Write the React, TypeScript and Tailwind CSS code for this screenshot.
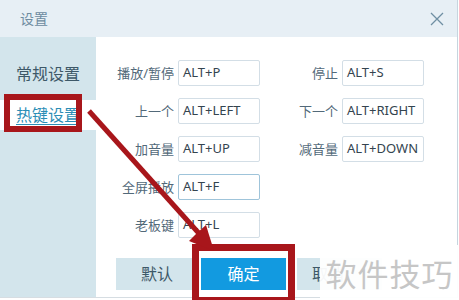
import React from 'react';

const FONT = { fontFamily: '"Noto Sans", "Noto Sans CJK SC", sans-serif' };

type Hotkey = { label: string; value: string; focus?: boolean };

const ROWS: [Hotkey, Hotkey | null][] = [
  [{ label: '播放/暂停', value: 'ALT+P' }, { label: '停止', value: 'ALT+S' }],
  [{ label: '上一个', value: 'ALT+LEFT' }, { label: '下一个', value: 'ALT+RIGHT' }],
  [{ label: '加音量', value: 'ALT+UP' }, { label: '减音量', value: 'ALT+DOWN' }],
  [{ label: '全屏播放', value: 'ALT+F', focus: true }, null],
  [{ label: '老板键', value: 'ALT+L' }, null],
];

function Field({ item }: { item: Hotkey }) {
  return (
    <>
      <span className="w-[82px] text-right text-[13px] leading-none text-[#526979] pr-[4px]">
        {item.label}
      </span>
      <div
        className={`w-[82px] h-[26px] flex items-center pl-[4px] rounded-[2px] border bg-white text-[13px] text-[#34444f] ${
          item.focus ? 'border-[#9fc4da]' : 'border-[#d3dee6]'
        }`}
      >
        {item.value}
      </div>
    </>
  );
}

export default function App() {
  return (
    <div className="relative w-[459px] h-[300px] bg-white overflow-hidden" style={FONT}>
      <div className="w-[458px] h-[298px] border-r border-[#c6d5df] flex flex-col">
        {/* title bar */}
        <div className="h-[37px] shrink-0 bg-[#e7eff5] flex items-center justify-between pl-[20px] pr-[13px]">
          <span className="text-[14px] text-[#6d8ba0]">设置</span>
          <svg width="14" height="14" viewBox="0 0 14 14">
            <path d="M1 1 L13 13 M13 1 L1 13" stroke="#6f8fa3" strokeWidth="1.3" fill="none" />
          </svg>
        </div>

        <div className="flex flex-1 border-b border-[#d6dde2]">
          {/* sidebar */}
          <aside className="w-[96px] shrink-0 bg-[#d3e5ec] pt-[22px]">
            <div className="h-[30px] flex items-center pl-[16px] text-[16px] text-[#3d5868]">常规设置</div>
            <div className="mt-[11px] h-[30px] bg-white flex items-center pl-[16px] text-[16px] text-[#2b8db5] underline decoration-1 underline-offset-[3px]">
              热键设置
            </div>
          </aside>

          {/* content */}
          <main className="flex-1 pt-[23px]">
            <div className="flex flex-col gap-[12px]">
              {ROWS.map(([a, b], i) => (
                <div key={i} className="flex items-center h-[26px]">
                  <Field item={a} />
                  {b && <Field item={b} />}
                </div>
              ))}
            </div>

            <div className="flex mt-[20px] pl-[20px] h-[32px]">
              <button className="w-[82px] h-full bg-[#d3e5ec] text-[16px] text-[#3d5868]">默认</button>
              <button className="ml-[3px] w-[85px] h-full bg-[#129ae0] text-[16px] text-white">确定</button>
              <button className="ml-[11px] w-[85px] h-full whitespace-nowrap bg-[#d3e5ec] text-[16px] text-[#3d5868] text-left pl-[15px]">
                取消
              </button>
            </div>
          </main>
        </div>
      </div>

      {/* annotations */}
      <div className="absolute left-[4px] top-[94px] w-[78px] h-[38px] border-[6px] border-[#a8161b]" />
      <div className="absolute left-[192px] top-[244px] w-[103px] h-[60px] border-[7px] border-[#a8161b]" />
      <svg className="absolute inset-0 pointer-events-none" width="459" height="300" viewBox="0 0 459 300">
        <line x1="89" y1="111" x2="204" y2="239" stroke="#a8161b" strokeWidth="5" />
        <polygon points="214,251 189,241 197,233 206,225" fill="#a8161b" />
      </svg>

      {/* watermark */}
      <div className="absolute left-[320px] top-[245px] right-0 bottom-0 bg-white/95 flex items-center justify-center">
        <span className="text-[31px] leading-none text-[#c6c6c6] tracking-[1px]" style={{ fontFamily: '"Noto Sans CJK SC", sans-serif' }}>
          软件技巧
        </span>
      </div>
    </div>
  );
}
